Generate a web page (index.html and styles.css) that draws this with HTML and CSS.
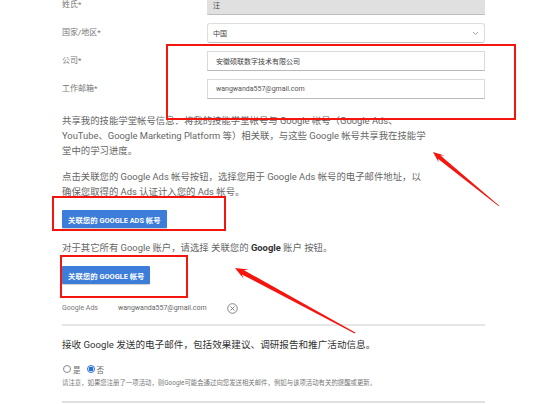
FILE: index.html
```html
<!DOCTYPE html>
<html lang="zh-CN">
<head>
  <meta charset="UTF-8" />
  <meta name="viewport" content="width=device-width, initial-scale=1" />
  <title>技能学堂 - 帐号信息</title>
  <link rel="stylesheet" href="styles.css">
</head>
<body>
  <div class="page">
    <div class="fields">
      <div class="field">
        <label>姓氏*</label>
        <div class="input disabled">汪</div>
      </div>
      <div class="field">
        <label>国家/地区*</label>
        <div class="input select">
          <span>中国</span>
          <svg width="7" height="5" viewBox="0 0 7 5"><path d="M1 1l2.5 2.5L6 1" fill="none" stroke="#888" stroke-width="0.8"/></svg>
        </div>
      </div>
      <div class="field">
        <label>公司*</label>
        <div class="input">安徽硕联数字技术有限公司</div>
      </div>
      <div class="field">
        <label>工作邮箱*</label>
        <div class="input email">wangwanda557@gmail.com</div>
      </div>
    </div>

    <p class="desc first">共享我的技能学堂帐号信息：将我的技能学堂帐号与 Google 帐号（Google Ads、YouTube、Google Marketing Platform 等）相关联，与这些 Google 帐号共享我在技能学堂中的学习进度。</p>
    <p class="desc">点击关联您的 Google Ads 帐号按钮，选择您用于 Google Ads 帐号的电子邮件地址，以确保您取得的 Ads 认证计入您的 Ads 帐号。</p>
    <button type="button" class="btn">关联您的 GOOGLE ADS 帐号</button>
    <p class="desc">对于其它所有 Google 账户，请选择 关联您的 <strong>Google</strong> 账户 按钮。</p>
    <button type="button" class="btn">关联您的 GOOGLE 帐号</button>

    <div class="linked">
      <span class="linked-type">Google Ads</span>
      <span class="linked-mail">wangwanda557@gmail.com</span>
      <svg class="unlink" width="11" height="11" viewBox="0 0 11 11">
        <circle cx="5.5" cy="5.5" r="4.8" fill="none" stroke="#666" stroke-width="0.8"/>
        <path d="M3.5 3.5l4 4M7.5 3.5l-4 4" stroke="#666" stroke-width="0.8"/>
      </svg>
    </div>

    <div class="divider"></div>

    <p class="optin">接收 Google 发送的电子邮件，包括效果建议、调研报告和推广活动信息。</p>
    <div class="radios">
      <span class="radio"></span><span>是</span>
      <span class="radio checked"></span><span>否</span>
    </div>
    <p class="note">请注意，如果您注册了一项活动，则Google可能会通过向您发送相关邮件，例如与该项活动有关的提醒或更新。</p>

    <div class="divider thin"></div>
  </div>

  <!-- red markup drawn on top of the form -->
  <svg class="marks" width="554" height="404" viewBox="0 0 554 404">
    <g fill="none" stroke="#f5150f" stroke-width="2">
      <rect x="167" y="45" width="348" height="74"/>
      <rect x="53" y="197" width="172" height="33"/>
      <rect x="61" y="256" width="126" height="41"/>
    </g>
    <g fill="#f5150f">
      <polygon points="499.25,205.7 440.5,155.6 444.4,155.5 433,152 438.7,162.5 437.9,158.7 498.75,206.3"/>
      <polygon points="355.3,332.5 244,270.2 249,269.4 235,268 243.8,279 241.8,274.4 354.7,333.5"/>
    </g>
  </svg>
</body>
</html>
```

FILE: styles.css
```css
body {
  margin: 0;
  font-family: Roboto, "Noto Sans CJK SC", sans-serif;
  background: #fff;
}

.page {
  width: 423px;
  padding-left: 62px;
  margin-top: -5px;
}

.fields {
  display: flex;
  flex-direction: column;
  gap: 8px;
}

.field {
  display: grid;
  grid-template-columns: 145px 278px;
  align-items: center;
  height: 20px;
}

.field label {
  font-size: 8px;
  color: #777;
  margin-bottom: 4px;
}

.input {
  box-sizing: border-box;
  height: 20px;
  display: flex;
  align-items: center;
  padding: 0 8px;
  border: 1px solid #dadada;
  border-bottom-color: #b9b9b9;
  font-size: 7px;
  color: #444;
  background: #fff;
}

.input.disabled {
  background: #e0e0e0;
  border-color: #e0e0e0;
  border-bottom-color: #bdbdbd;
  padding-left: 5px;
}

.input.select {
  justify-content: space-between;
  padding: 0 5px;
  border-radius: 3px;
  border-color: #dedede;
  border-bottom-color: #c4c4c4;
}

.input.email {
  color: #555;
}

.desc {
  width: 366px;
  margin: 10.5px 0 0;
  font-size: 9.4px;
  line-height: 15px;
  color: #666;
}

.desc.first {
  margin-top: 14px;
}

.desc strong {
  color: #333;
}

.btn {
  display: block;
  height: 18px;
  margin-top: 11.5px;
  padding: 0 6px;
  border: none;
  border-radius: 1px;
  background: #3b7dd8;
  color: #fff;
  font-family: inherit;
  font-size: 7.4px;
  font-weight: bold;
  box-shadow: 0 1px 1px rgba(0,0,0,0.2);
}

.btn + .desc {
  margin-top: 11.5px;
}

.desc + .btn + .linked {
  margin-top: 17px;
}

.linked {
  display: flex;
  align-items: center;
  height: 14px;
  font-size: 7px;
  color: #777;
}

.linked-type {
  width: 56px;
}

.linked-mail {
  width: 109px;
  color: #666;
}

.divider {
  height: 2px;
  margin-top: 9px;
  background: #e6e6e6;
}

.divider.thin {
  margin-top: 13.5px;
  background: #e0e0e0;
}

.optin {
  margin: 10.5px 0 0;
  font-size: 9.6px;
  line-height: 15px;
  color: #333;
}

.radios {
  display: flex;
  align-items: center;
  gap: 2px;
  height: 10px;
  margin-top: 12.5px;
  font-size: 7.5px;
  color: #666;
}

.radio {
  box-sizing: border-box;
  width: 8px;
  height: 8px;
  margin-left: 1px;
  border: 1px solid #888;
  border-radius: 50%;
}

.radio.checked {
  margin-left: 4px;
  border-color: #2a72d8;
  background: radial-gradient(circle, #2a72d8 0 2.2px, #fff 2.6px);
}

.note {
  margin: 4.5px 0 0;
  font-size: 6.4px;
  line-height: 9px;
  color: #777;
  white-space: nowrap;
}

.marks {
  position: absolute;
  top: 0;
  left: 0;
  pointer-events: none;
}
```
